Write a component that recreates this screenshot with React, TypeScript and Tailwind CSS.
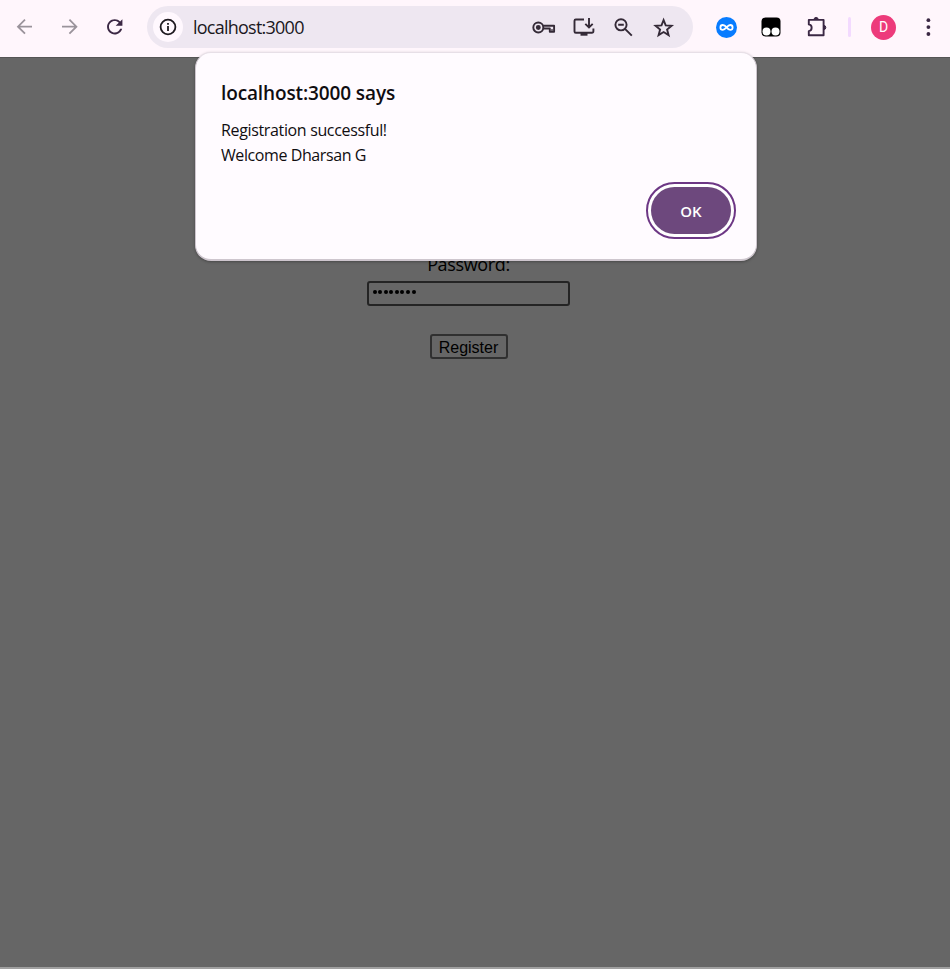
import type { ReactNode } from "react";

function Icon({ children, className = "" }: { children: ReactNode; className?: string }) {
  return (
    <svg viewBox="0 0 24 24" fill="none" stroke="currentColor" strokeWidth="1.9" className={"size-6 shrink-0 " + className}>
      {children}
    </svg>
  );
}

function AddressBar() {
  return (
    <div className="ml-5 flex h-[42px] w-[546px] shrink-0 items-center rounded-full bg-[#eee7f1] pl-1.5 pr-[17.5px] text-[#342a37]">
      <div className="flex size-[30px] shrink-0 items-center justify-center rounded-full bg-[#fff8fe] text-[#1e1a20]">
        <Icon>
          <circle cx="12" cy="12" r="7.4" strokeWidth="1.8" />
          <path d="M12 11v5M12 8v1.8" strokeWidth="1.8" />
        </Icon>
      </div>
      <span className="ml-[10px] whitespace-nowrap font-['Open_Sans',sans-serif] text-[18px] leading-6 tracking-[-0.76px] text-[#1b171d]">localhost:3000</span>
      <div className="ml-auto flex gap-4">
        <Icon>
          <circle cx="6.3" cy="12.5" r="5" />
          <circle cx="6.3" cy="12.5" r="1.5" fill="currentColor" />
          <path d="M11 10.7H22.1v6h-4.3v-3.2h-6.5" strokeLinejoin="round" />
          <path d="M20 14v2.5" strokeWidth="1.2" />
        </Icon>
        <Icon>
          <path d="M12 4.5H3.8Q2.5 4.5 2.5 5.8v10.7q0 1.3 1.3 1.3h16q1.6 0 1.6-1.5v-2.7M17 3v9.2M13.3 8.8l3.7 3.7 3.7-3.7" />
          <path d="M8.5 19.3h7" strokeWidth="2.8" />
        </Icon>
        <Icon>
          <circle cx="9" cy="9.8" r="5.6" />
          <path d="M13 13.8l6.8 6.9M6.2 9.8h5.6" />
        </Icon>
        <Icon>
          <path d="M11.6 5l2.1 5.4 5.9.4-4.5 3.7 1.5 5.6-5-3.1-5 3.1 1.5-5.6-4.5-3.7 5.9-.4z" strokeWidth="1.9" />
        </Icon>
      </div>
    </div>
  );
}

function Toolbar() {
  return (
    <header className="flex h-[57px] shrink-0 items-center bg-[#fff6fc] pb-[3px] pl-[13px] text-[#3b2844]">
      <Icon className="text-[#9a939b]">
        <path d="M19 11.7H5M12 4.7l-7 7 7 7" strokeWidth="1.8" />
      </Icon>
      <Icon className="ml-5 text-[#9a939b]">
        <path d="M5 11.7h14.4M12.4 4.7l7 7-7 7" strokeWidth="1.8" />
      </Icon>
      <Icon className="ml-[22px]">
        <path transform="translate(.2 .3) scale(.96)" fill="currentColor" stroke="none" d="M17.65 6.35C16.2 4.9 14.21 4 12 4c-4.42 0-7.99 3.58-7.99 8s3.57 8 7.99 8c3.73 0 6.84-2.55 7.73-6h-2.08c-.82 2.33-3.04 4-5.65 4-3.31 0-6-2.69-6-6s2.69-6 6-6c1.66 0 3.14.69 4.22 1.78L13 11h7V4l-2.35 2.35z" />
      </Icon>
      <AddressBar />
      <svg viewBox="0 0 21 21" className="ml-[23px] size-[21px] shrink-0">
        <circle cx="10.5" cy="10.5" r="10.5" fill="#087cff" />
        <path d="M10.5 10.2C9 8.4 8 8 6.8 8a2.3 2.3 0 0 0 0 4.8c3 0 4.4-4.8 7.4-4.8a2.3 2.3 0 0 1 0 4.8c-1.2 0-2.2-.5-3.7-2.4" fill="none" stroke="#fff" strokeWidth="1.8" />
      </svg>
      <svg viewBox="0 0 20 20" className="ml-[24px] size-5 shrink-0">
        <rect x=".5" y=".5" width="19" height="19" rx="4" fill="#000" />
        <circle cx="5.5" cy="14.5" r="4" fill="#fff" />
        <circle cx="14.5" cy="14.5" r="4" fill="#fff" />
      </svg>
      <Icon className="ml-6">
        <path d="M3.8 4.9h14.8v15.3H3.8v-4.1c3.8-.5 3.8-6.2 0-6.7z" strokeLinejoin="round" />
        <path d="M9 4.5a2.1 2.1 0 0 1 4.2 0zM18.7 10.4a2.1 2.1 0 0 1 0 4.2z" fill="currentColor" strokeWidth="1" />
      </Icon>
      <div className="ml-[19px] h-5 w-[3px] shrink-0 rounded-full bg-[#f3daff]" />
      <div className="ml-5 flex size-[25px] shrink-0 items-center justify-center rounded-full bg-[#ed3b7b] font-[Roboto,sans-serif] text-[14px] text-white">D</div>
      <Icon className="ml-5">
        <g fill="currentColor" stroke="none">
          <circle cx="12.4" cy="5.2" r="1.9" />
          <circle cx="12.4" cy="12.1" r="1.9" />
          <circle cx="12.4" cy="19" r="1.9" />
        </g>
      </Icon>
    </header>
  );
}

function Dialog() {
  return (
    <div role="alertdialog" className="absolute left-[195px] top-[52px] flex h-[209px] w-[562px] flex-col rounded-2xl border border-b-2 border-[#cec6ce] border-t-[#e7dfe7] bg-[#fffbff] pl-[25px] pr-5 pt-[27px] font-['Open_Sans',sans-serif] text-[#100d11] shadow-[0_1px_3px_rgba(0,0,0,0.3)]">
      <h1 className="whitespace-nowrap text-[19px] font-semibold leading-[26px] tracking-[-0.12px]">localhost:3000 says</h1>
      <p className="mt-3 whitespace-nowrap text-[16px] leading-[25px] tracking-[-0.35px]">
        Registration successful!
        <br />
        <span className="tracking-[-0.41px]">Welcome Dharsan G</span>
      </p>
      <button className="mt-[14px] flex h-[57px] w-[90px] items-center justify-center self-end rounded-full border-2 border-[#6d3785] bg-white p-[3px]">
        <span className="flex h-[47px] w-20 items-center justify-center rounded-full bg-[#6d487d] pt-0.5 text-[15px] font-semibold text-white">OK</span>
      </button>
    </div>
  );
}

export default function App() {
  return (
    <div className="relative flex h-[969px] w-[950px] flex-col overflow-hidden bg-[#666]">
      <Toolbar />
      <main className="flex flex-1 flex-col items-center border-b-2 border-t border-b-[#a0a0a0] border-t-[#555] pr-[13px] pt-[194px] text-black">
        <label className="whitespace-nowrap font-['Open_Sans',sans-serif] text-[18px] leading-6 tracking-[-0.35px]">Password:</label>
        <div className="mt-[5px] flex h-[25px] w-[203px] items-center gap-[1.6px] rounded-[3px] border-2 border-[#242424] pb-[3px] pl-[3.5px]">
          {Array.from({ length: 8 }, (_, i) => (
            <span key={i} className="size-1 rounded-full bg-black" />
          ))}
        </div>
        <button className="mt-7 h-[25px] w-[78px] rounded-[3px] border-2 border-[#303030] pt-0.5 font-['Liberation_Sans',Arial,sans-serif] text-[16px] leading-5">Register</button>
      </main>
      <Dialog />
    </div>
  );
}
